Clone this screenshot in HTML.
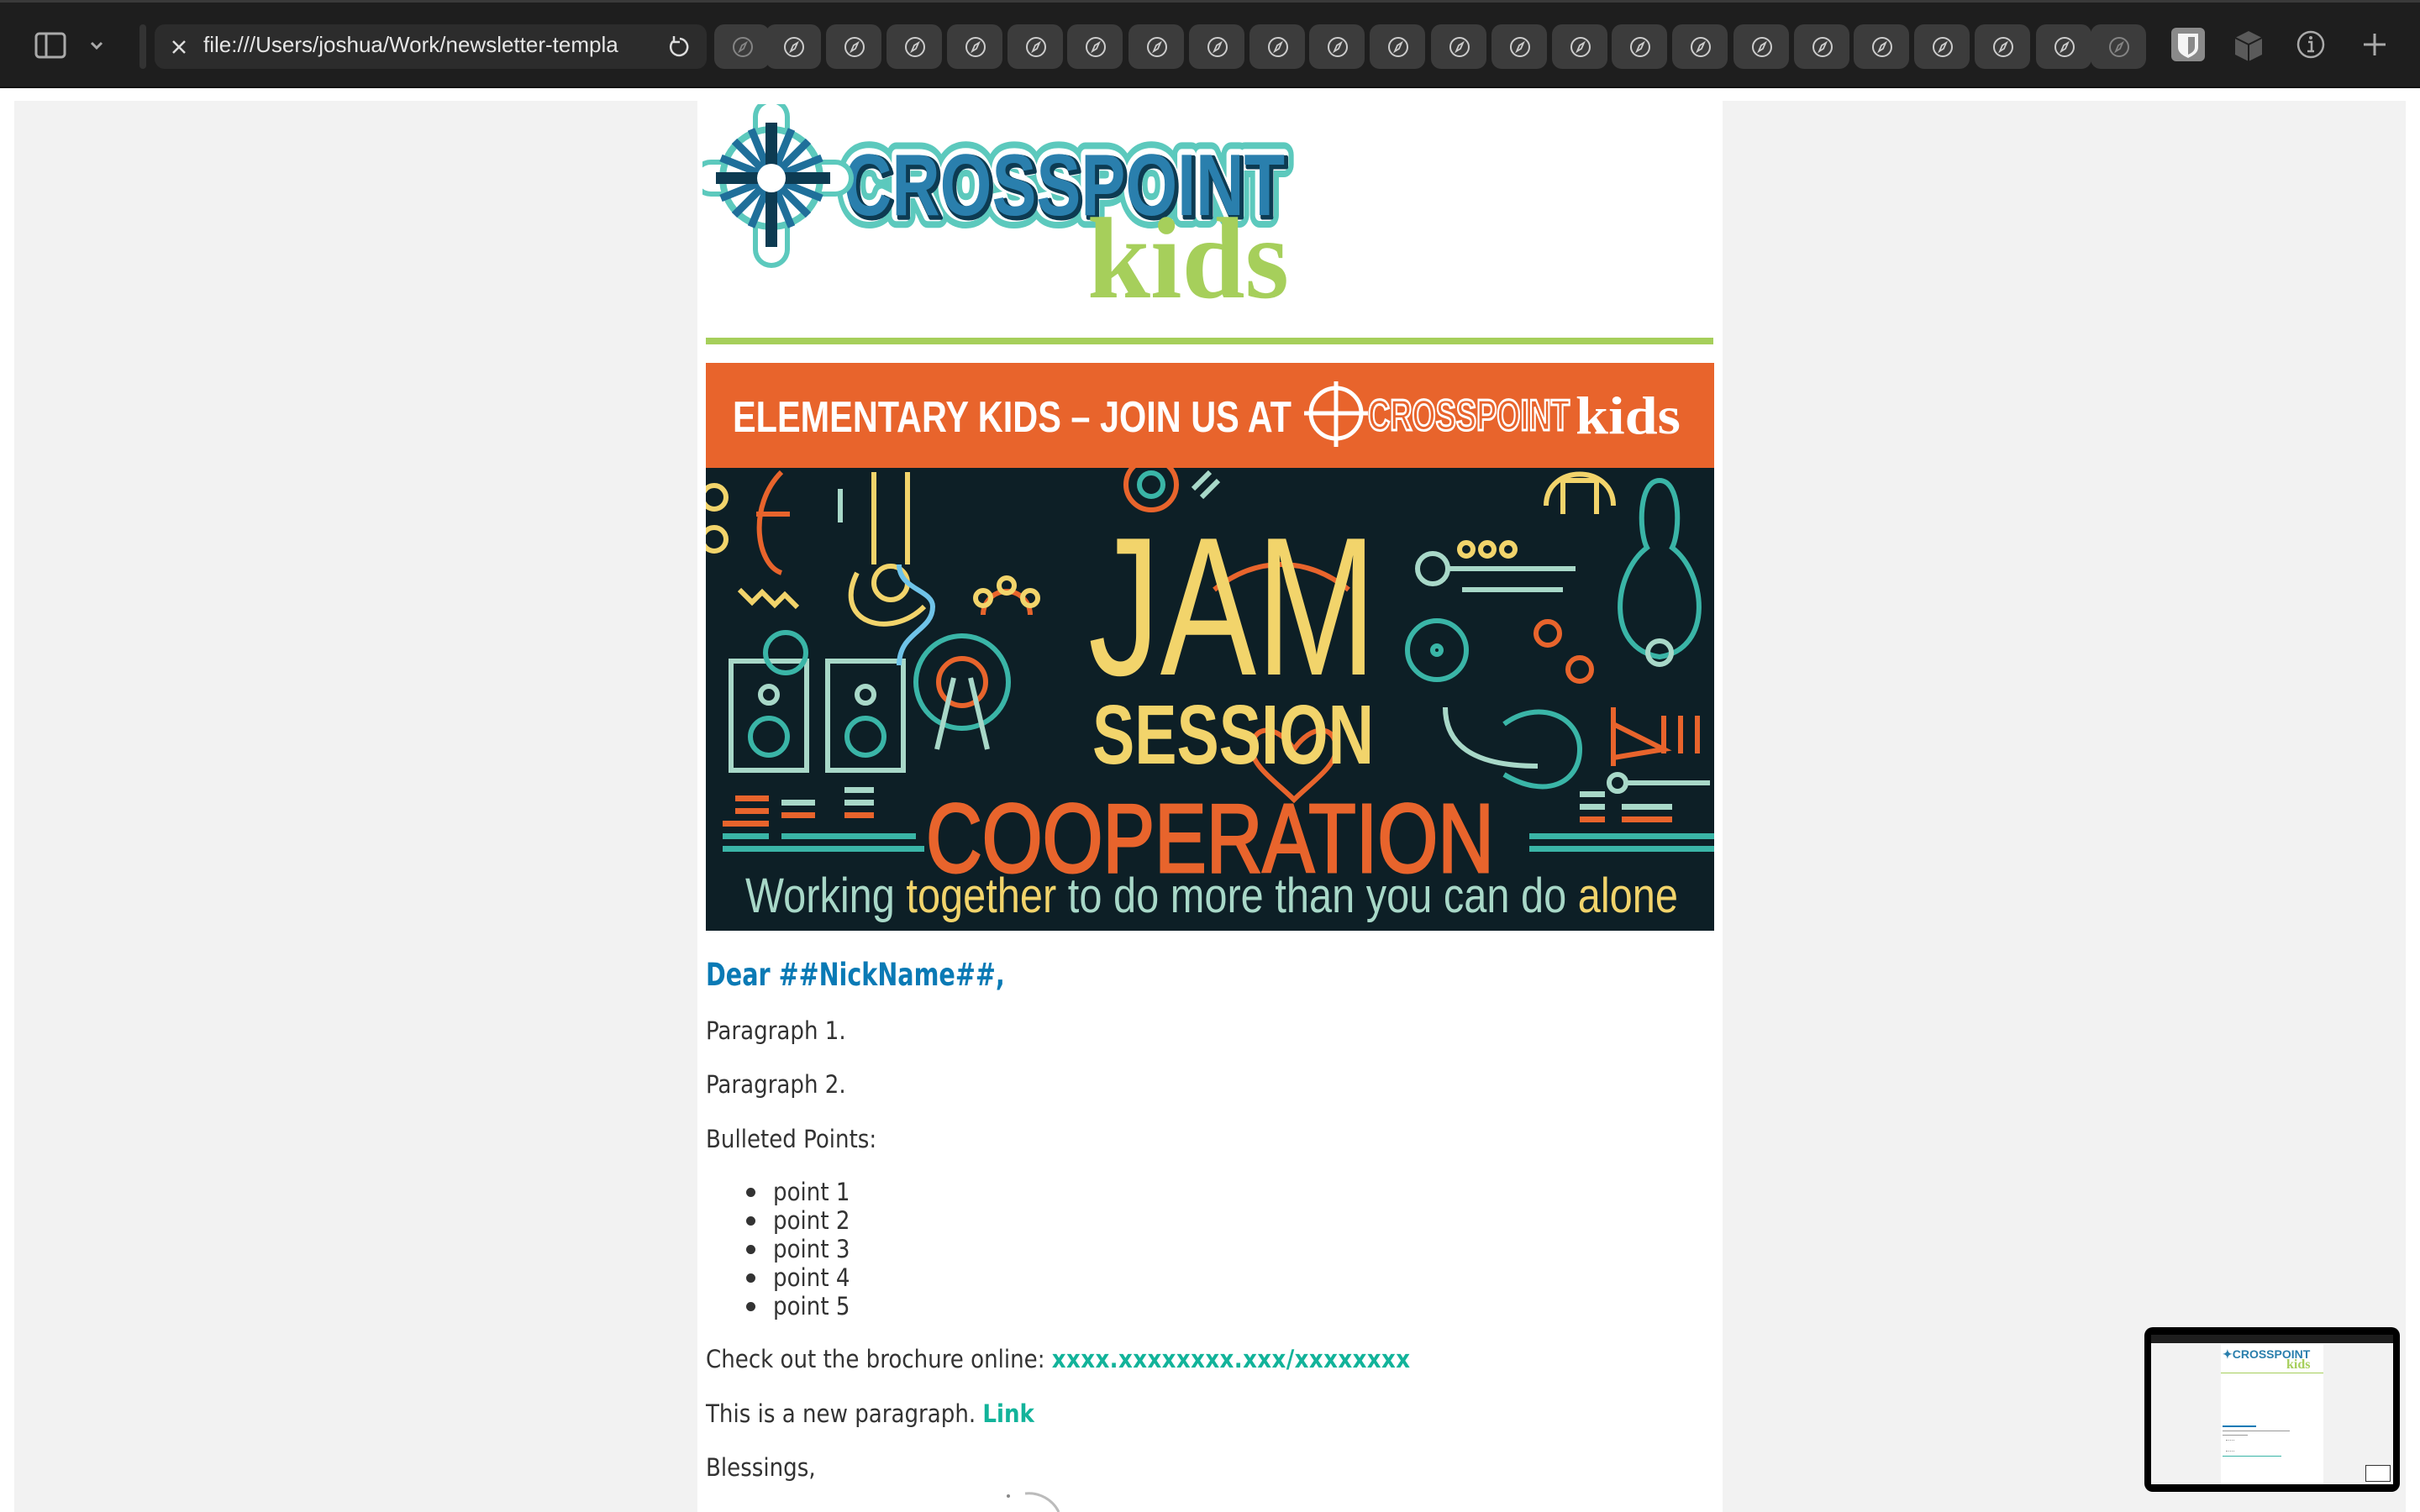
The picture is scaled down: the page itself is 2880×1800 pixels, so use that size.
<!DOCTYPE html>
<html><head><meta charset="utf-8"><style>
*{margin:0;padding:0;box-sizing:border-box}
body{width:2880px;height:1800px;background:#fff;overflow:hidden;position:relative;font-family:"DejaVu Sans Condensed","Liberation Sans",sans-serif}
.bar{position:absolute;left:0;top:0;width:2880px;height:105px;background:#1e1e1e;border-top:3px solid #3a3a3a;border-bottom:2px solid #111}
.url{position:absolute;left:184px;top:26px;width:657px;height:53px;background:#2c2c2c;border-radius:12px}
.url span{position:absolute;left:58px;top:9px;font:26px "Liberation Sans",sans-serif;color:#e6e6e6;white-space:nowrap;width:530px;overflow:hidden}
.tab{position:absolute;top:26px;width:66px;height:53px;background:#3c3c3c;border-radius:12px}
.tab svg{position:absolute;left:21px;top:14px}
.gray{position:absolute;left:17px;top:120px;width:2846px;height:1680px;background:#f2f2f2}
.col{position:absolute;left:830px;top:120px;width:1220px;height:1680px;background:#fff}
.txt{position:absolute;left:840px;font-size:29px;color:#333;white-space:nowrap;line-height:36px}
a{color:#12b39a;font-weight:bold;text-decoration:none}
.b{position:absolute;left:888px;width:11px;height:11px;border-radius:50%;background:#333}
</style></head><body>
<div class="bar">
 <svg style="position:absolute;left:40px;top:34px" width="90" height="36" viewBox="0 0 90 36"><rect x="3" y="3" width="34" height="28" rx="4" fill="none" stroke="#aaa" stroke-width="3"/><line x1="15" y1="3" x2="15" y2="31" stroke="#aaa" stroke-width="3"/><path d="M69 14l6 6 6-6" fill="none" stroke="#aaa" stroke-width="3"/></svg>
 <div style="position:absolute;left:166px;top:26px;width:8px;height:53px;background:#333;border-radius:4px"></div>
 <div class="url"><svg style="position:absolute;left:20px;top:18px" width="18" height="18"><path d="M2 2L16 16M16 2L2 16" stroke="#ddd" stroke-width="2.5"/></svg><span>file:///Users/joshua/Work/newsletter-templa</span><svg style="position:absolute;left:608px;top:12px" width="30" height="30" viewBox="0 0 30 30"><path d="M9 8a10 10 0 1 0 8-3" fill="none" stroke="#ddd" stroke-width="2.5"/><path d="M10 2v7h7" fill="none" stroke="#ddd" stroke-width="2.5"/></svg></div>
 <div id="tabs"></div>
 <svg style="position:absolute;left:2584px;top:30px" width="40" height="40" viewBox="0 0 40 40"><rect width="40" height="40" rx="6" fill="#8a8a8a"/><path d="M8 7h24v16c0 7-6 10-12 13C14 33 8 30 8 23z" fill="#f5f5f5"/><path d="M20 11h8v12c0 5-4 7-8 9z" fill="#8a8a8a"/></svg>
 <svg style="position:absolute;left:2657px;top:32px" width="38" height="40" viewBox="0 0 38 40"><path d="M19 2l16 8v20l-16 8-16-8V10z" fill="#5a5a5a"/><path d="M3 10l16 8 16-8M19 18v20" stroke="#1e1e1e" stroke-width="2" fill="none"/></svg>
 <svg style="position:absolute;left:2732px;top:32px" width="36" height="36" viewBox="0 0 36 36"><circle cx="18" cy="18" r="15" fill="none" stroke="#aaa" stroke-width="2.5"/><circle cx="18" cy="10" r="2" fill="#aaa"/><path d="M15 15h4v11M14 26h8" stroke="#aaa" stroke-width="2.5" fill="none"/></svg>
 <svg style="position:absolute;left:2812px;top:36px" width="28" height="28"><path d="M14 1v26M1 14h26" stroke="#aaa" stroke-width="3"/></svg>
</div>
<div class="gray"></div>
<div class="col"></div>
<!-- logo -->
<svg style="position:absolute;left:836px;top:124px" width="710" height="240" viewBox="0 0 710 240">
 <g stroke-linejoin="round" font-family="Liberation Sans" font-weight="bold" font-size="104">
  <text x="168" y="132" fill="#5cc9bd" stroke="#5cc9bd" stroke-width="30" textLength="525" lengthAdjust="spacingAndGlyphs">CROSSPOINT</text>
  <text x="168" y="132" fill="#fff" stroke="#fff" stroke-width="14" textLength="525" lengthAdjust="spacingAndGlyphs">CROSSPOINT</text>
  <text x="171" y="135" fill="#0d3b52" stroke="#0d3b52" stroke-width="5" textLength="525" lengthAdjust="spacingAndGlyphs">CROSSPOINT</text>
  <text x="168" y="132" fill="#2a7fad" textLength="525" lengthAdjust="spacingAndGlyphs">CROSSPOINT</text>
 </g>
 <g stroke-linecap="round">
  <path d="M82 15v158M10 88h148" stroke="#5cc9bd" stroke-width="44"/>
  <path d="M82 15v158M10 88h148" stroke="#fff" stroke-width="32"/>
  <circle cx="82" cy="88" r="62" fill="#5cc9bd"/>
  <circle cx="82" cy="88" r="54" fill="#fff"/>
 </g>
 <g stroke="#1f6f9a" stroke-width="9">
  <path d="M82 22v148M16 88h136M38 44l88 88M126 44l-88 88M58 30l48 116M106 30l-48 116M22 64l120 48M142 64l-120 48"/>
 </g>
 <path d="M82 22v148M16 88h136" stroke="#0d3b52" stroke-width="14"/>
 <circle cx="82" cy="88" r="17" fill="#fff"/>
 <text x="458" y="230" font-family="Liberation Serif" font-weight="bold" font-size="138" fill="#a6cf5b" textLength="240" lengthAdjust="spacingAndGlyphs">kids</text>
</svg>
<div style="position:absolute;left:840px;top:402px;width:1199px;height:8px;background:#a6cf5b"></div>
<!-- banner -->
<svg style="position:absolute;left:840px;top:432px" width="1200" height="676" viewBox="0 0 1200 676">
 <rect width="1200" height="676" fill="#0d1f26"/>
 <g fill="none" stroke-width="6">
  <circle cx="220" cy="262" r="20" stroke="#f2d46b"/>
  <path d="M200 130v110M240 130v110M180 250c-30 60 40 80 80 40" stroke="#f2d46b"/>
  <path d="M90 130c-40 40-30 110 0 120M60 180h40" stroke="#e8642c"/>
  <circle cx="10" cy="160" r="14" stroke="#f2d46b"/><circle cx="10" cy="210" r="14" stroke="#f2d46b"/>
  <rect x="30" y="355" width="90" height="130" stroke="#a8d8c8"/>
  <rect x="145" y="355" width="90" height="130" stroke="#a8d8c8"/>
  <circle cx="75" cy="445" r="22" stroke="#3ab5a7"/><circle cx="190" cy="445" r="22" stroke="#3ab5a7"/>
  <circle cx="75" cy="395" r="10" stroke="#a8d8c8"/><circle cx="190" cy="395" r="10" stroke="#a8d8c8"/>
  <circle cx="95" cy="345" r="24" stroke="#3ab5a7"/>
  <circle cx="305" cy="380" r="55" stroke="#3ab5a7"/><circle cx="305" cy="380" r="28" stroke="#e8642c"/>
  <path d="M295 375l-20 85M315 375l20 85" stroke="#a8d8c8"/>
  <path d="M230 360c0-40 40-40 40-70c0-20-40-20-40-50" stroke="#6fc3e8"/>
  <path d="M330 300a28 28 0 0 1 56 0" stroke="#e8642c"/>
  <circle cx="330" cy="280" r="9" stroke="#f2d46b"/><circle cx="358" cy="265" r="9" stroke="#f2d46b"/><circle cx="386" cy="280" r="9" stroke="#f2d46b"/>
  <path d="M40 270l15 15 12-12 15 15 12-12 15 15" stroke="#f2d46b"/>
  <path d="M605 270c50-40 110-40 160 0" stroke="#e8642c"/>
  <circle cx="870" cy="342" r="35" stroke="#3ab5a7"/><circle cx="870" cy="342" r="5" stroke="#3ab5a7"/>
  <circle cx="865" cy="245" r="18" stroke="#a8d8c8"/>
  <path d="M885 245h150M900 270h120" stroke="#a8d8c8"/>
  <circle cx="905" cy="222" r="8" stroke="#f2d46b"/><circle cx="930" cy="222" r="8" stroke="#f2d46b"/><circle cx="955" cy="222" r="8" stroke="#f2d46b"/>
  <circle cx="1002" cy="322" r="14" stroke="#e8642c"/><circle cx="1040" cy="365" r="14" stroke="#e8642c"/>
  <path d="M1135 140c-25 0-25 60-15 80c-40 30-50 120 15 130c65-10 55-100 15-130c10-20 10-80-15-80z" stroke="#3ab5a7"/>
  <circle cx="1135" cy="345" r="14" stroke="#a8d8c8"/>
  <path d="M1020 180v-40h40v40M1000 170c0-50 80-50 80 0" stroke="#f2d46b"/>
  <path d="M880 410c0 60 60 70 110 70" stroke="#a8d8c8"/>
  <path d="M950 430c40-30 90-10 90 30s-40 60-90 30" stroke="#3ab5a7"/>
  <path d="M1080 410v70M1080 430l60 30-60 10M1140 420v45M1160 420v45M1180 420v45" stroke="#e8642c"/>
  <path d="M860 460c-20-30-50-30-50 0 0 20 30 40 50 60 20-20 50-40 50-60 0-30-30-30-50 0z" stroke="#e8642c" transform="translate(-160 0)"/>
  <circle cx="1085" cy="500" r="10" stroke="#a8d8c8"/><path d="M1095 500h100" stroke="#a8d8c8"/>
  <circle cx="530" cy="145" r="30" stroke="#e8642c"/><circle cx="530" cy="145" r="14" stroke="#3ab5a7"/>
  <path d="M580 150l20 -20M590 160l20-20M160 150v40" stroke="#a8d8c8"/>
 </g>
 <g>
  <rect x="20" y="545" width="55" height="7" fill="#e8642c"/><rect x="20" y="560" width="55" height="7" fill="#3ab5a7"/>
  <rect x="35" y="530" width="40" height="7" fill="#e8642c"/><rect x="35" y="515" width="40" height="7" fill="#e8642c"/>
  <rect x="90" y="520" width="40" height="7" fill="#a8d8c8"/><rect x="90" y="535" width="40" height="7" fill="#e8642c"/><rect x="90" y="560" width="160" height="7" fill="#3ab5a7"/>
  <rect x="165" y="505" width="35" height="7" fill="#a8d8c8"/><rect x="165" y="520" width="35" height="7" fill="#a8d8c8"/><rect x="165" y="535" width="35" height="7" fill="#e8642c"/>
  <rect x="1040" y="510" width="30" height="7" fill="#a8d8c8"/><rect x="1040" y="525" width="30" height="7" fill="#a8d8c8"/><rect x="1040" y="540" width="30" height="7" fill="#e8642c"/>
  <rect x="1090" y="525" width="60" height="7" fill="#a8d8c8"/><rect x="1090" y="540" width="60" height="7" fill="#e8642c"/>
  <rect x="980" y="560" width="220" height="7" fill="#3ab5a7"/><rect x="980" y="575" width="220" height="7" fill="#3ab5a7"/><rect x="20" y="575" width="240" height="7" fill="#3ab5a7"/>
 </g>
 <rect width="1200" height="125" fill="#e8642c"/>
 <text x="32" y="82" font-family="Liberation Sans" font-weight="bold" font-size="52" fill="#fff" textLength="665" lengthAdjust="spacingAndGlyphs">ELEMENTARY KIDS – JOIN US AT</text>
 <g fill="none" stroke="#fff" stroke-width="5"><circle cx="750" cy="60" r="30"/><path d="M750 22v78M712 60h76"/></g>
 <text x="788" y="80" font-family="Liberation Sans" font-weight="bold" font-size="52" fill="#e8642c" stroke="#fff" stroke-width="3" textLength="240" lengthAdjust="spacingAndGlyphs">CROSSPOINT</text>
 <text x="1035" y="84" font-family="Liberation Serif" font-weight="bold" font-size="64" fill="#fff" textLength="125" lengthAdjust="spacingAndGlyphs">kids</text>
 <text x="455" y="371" font-family="Liberation Sans" font-size="235" fill="#f2d46b" textLength="343" lengthAdjust="spacingAndGlyphs">JAM</text>
 <text x="460" y="477" font-family="Liberation Sans" font-weight="bold" font-size="100" fill="#f2d46b" textLength="335" lengthAdjust="spacingAndGlyphs">SESSION</text>
 <text x="262" y="606" font-family="Liberation Sans" font-size="116" fill="#e8642c" stroke="#e8642c" stroke-width="3" textLength="676" lengthAdjust="spacingAndGlyphs">COOPERATION</text>
 <text x="47" y="654" font-family="Liberation Sans" font-size="58" fill="#a8d8c8" textLength="1110" lengthAdjust="spacingAndGlyphs">Working <tspan fill="#f2d46b">together</tspan> to do more than you can do <tspan fill="#f2d46b">alone</tspan></text>
</svg>
<div class="txt" style="top:1139px;font-size:37px;font-weight:bold;color:#0a7ab5;line-height:44px;transform:scaleX(0.86);transform-origin:0 0">Dear ##NickName##,</div>
<div class="txt" style="top:1209px">Paragraph 1.</div>
<div class="txt" style="top:1273px">Paragraph 2.</div>
<div class="txt" style="top:1338px">Bulleted Points:</div>
<div class="b" style="top:1414px"></div><div class="b" style="top:1448px"></div><div class="b" style="top:1482px"></div><div class="b" style="top:1516px"></div><div class="b" style="top:1550px"></div>
<div class="txt" style="top:1402px;left:920px;line-height:34px">point 1<br>point 2<br>point 3<br>point 4<br>point 5</div>
<div class="txt" style="top:1600px">Check out the brochure online: <a style="letter-spacing:0.4px">xxxx.xxxxxxxx.xxx/xxxxxxxx</a></div>
<div class="txt" style="top:1665px">This is a new paragraph. <a>Link</a></div>
<div class="txt" style="top:1729px">Blessings,</div>
<svg style="position:absolute;left:1190px;top:1772px" width="80" height="28"><path d="M30 6a40 40 0 0 1 40 22" fill="none" stroke="#bbb" stroke-width="3"/><circle cx="10" cy="9" r="2" fill="#888"/></svg>
<!-- thumbnail -->
<div style="position:absolute;left:2552px;top:1580px;width:304px;height:196px;background:#000;border-radius:10px">
 <div style="position:absolute;left:8px;top:9px;width:288px;height:178px;background:#f2f2f2">
  <div style="position:absolute;left:0;top:0;width:288px;height:10px;background:#1e1e1e"></div>
  <div style="position:absolute;left:83px;top:11px;width:122px;height:167px;background:#fff">
   <div style="position:absolute;left:2px;top:4px;font:bold 14px 'Liberation Sans';color:#2a7fad">✦CROSSPOINT</div>
   <div style="position:absolute;left:78px;top:16px;font:bold 16px 'Liberation Serif';color:#a6cf5b">kids</div>
   <div style="position:absolute;left:0;top:34px;width:122px;height:1px;background:#a6cf5b"></div>
   <div style="position:absolute;left:2px;top:97px;width:40px;height:2px;background:#0a7ab5"></div>
   <div style="position:absolute;left:2px;top:103px;width:80px;height:1px;background:#999"></div>
   <div style="position:absolute;left:2px;top:108px;width:30px;height:1px;background:#999"></div>
   <div style="position:absolute;left:6px;top:114px;width:10px;height:14px;border-top:1px dotted #999;border-bottom:1px dotted #999"></div>
   <div style="position:absolute;left:2px;top:133px;width:70px;height:1px;background:#3ab5a7"></div>
  </div>
  <div style="position:absolute;left:255px;top:155px;width:30px;height:20px;border:1px solid #333;background:#fff"></div>
 </div>
</div>
<script>
var xs=[850,911,983,1055,1127,1199,1270,1343,1415,1487,1558,1630,1703,1775,1847,1918,1990,2063,2135,2206,2278,2350,2423,2488];
var h='';xs.forEach(function(x,i){var o=(i==0||i==23)?0.5:1;h+='<div class="tab" style="left:'+x+'px"><svg width="26" height="26" viewBox="0 0 26 26" style="opacity:'+o+'"><circle cx="13" cy="13" r="11" fill="none" stroke="#ccc" stroke-width="2"/><path d="M17 8l-3 7-5 3 3-7z" fill="none" stroke="#ccc" stroke-width="1.8"/></svg></div>';});
document.getElementById('tabs').innerHTML=h;
</script>
</body></html>
